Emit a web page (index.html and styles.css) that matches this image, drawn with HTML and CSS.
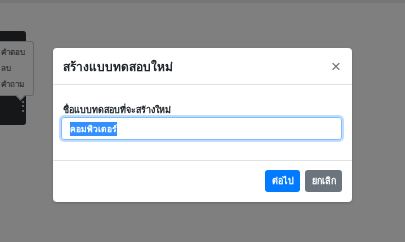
FILE: index.html
```html
<!DOCTYPE html>
<html>

<head>
  <meta charset="utf8">
  <meta name="viewport" content="width=device-width, initial-scale=1.0">
  <link rel="stylesheet" href="styles.css">
  <title>สร้างแบบทดสอบใหม่</title>
</head>

<body>
  <div class="topbar"></div>

  <div class="side-card">
    <div class="menu-pop">
      <div class="menu-item">คำตอบ</div>
      <div class="menu-item">ลบ</div>
      <div class="menu-item">คำถาม</div>
    </div>
    <div class="dots">&#8942;</div>
  </div>

  <div class="backdrop"></div>

  <div class="modal">
    <div class="modal-dialog">
      <div class="modal-header">
        <h5 class="modal-title">สร้างแบบทดสอบใหม่</h5>
        <span class="close">&times;</span>
      </div>
      <div class="modal-body">
        <label class="field-label">ชื่อแบบทดสอบที่จะสร้างใหม่</label>
        <div class="field-input"><span class="selected">คอมพิวเตอร์</span></div>
      </div>
      <div class="modal-footer">
        <button class="btn btn-primary">ต่อไป</button>
        <button class="btn btn-secondary">ยกเลิก</button>
      </div>
    </div>
  </div>
</body>

</html>
```

FILE: styles.css
```css
html, body {
  margin: 0;
  height: 100%;
}
body {
  background: #fff;
  font-family: "Liberation Sans", "Noto Sans", sans-serif;
  color: #212529;
  overflow: hidden;
}
.topbar {
  height: 3px;
  background: #e9ecef;
}

/* page content behind the backdrop */
.side-card {
  position: absolute;
  left: -20px;
  top: 31px;
  width: 46px;
  height: 94px;
  background: #2b2f33;
  border-radius: 3px;
}
.menu-pop {
  position: absolute;
  left: 20px;
  top: 10px;
  width: 34px;
  height: 55px;
  background: #fff;
  border: 1px solid #ccc;
  border-left: 0;
  border-radius: 0 3px 3px 0;
  box-sizing: border-box;
  padding-top: 3px;
  font-size: 8px;
  color: #333;
  overflow: hidden;
}
.side-card::after {
  content: "";
  position: absolute;
  left: 37px;
  top: 61px;
  width: 6px;
  height: 6px;
  background: #fff;
  border-right: 1px solid #ccc;
  border-bottom: 1px solid #ccc;
  transform: rotate(45deg);
}
.menu-item {
  height: 16px;
  line-height: 16px;
  padding-left: 1px;
  white-space: nowrap;
}
.dots {
  position: absolute;
  left: 37px;
  top: 69px;
  color: #fff;
  font-size: 12px;
  line-height: 1;
}

.backdrop {
  position: fixed;
  inset: 0;
  background: rgba(0, 0, 0, 0.5);
}

.modal {
  position: fixed;
  inset: 0;
}
.modal-dialog {
  width: 299px;
  margin: 48px auto 0;
  background: #fff;
  border-radius: 4px;
  box-shadow: 0 1px 3px rgba(0, 0, 0, 0.2);
}
.modal-header {
  display: flex;
  align-items: center;
  justify-content: space-between;
  height: 36px;
  padding: 0 11px 0 10px;
  border-bottom: 1px solid #dee2e6;
}
.modal-title {
  margin: 0;
  font-size: 12px;
  font-weight: 600;
}
.close {
  font-size: 17px;
  color: #6c757d;
  line-height: 1;
}
.modal-body {
  padding: 19px 10px 20px 8px;
}
.field-label {
  display: block;
  font-size: 9px;
  line-height: 12px;
  font-weight: bold;
  margin: 0 0 1px 2px;
}
.field-input {
  height: 23px;
  box-sizing: border-box;
  border: 1px solid #80bdff;
  border-radius: 3px;
  box-shadow: 0 0 0 2px rgba(0, 123, 255, 0.25);
  padding: 0 8px;
  display: flex;
  align-items: center;
  font-size: 8.5px;
  font-weight: bold;
}
.selected {
  background: #3390ff;
  color: #fff;
}
.modal-footer {
  display: flex;
  justify-content: flex-end;
  gap: 5px;
  padding: 9px 10px 10px;
  border-top: 1px solid #dee2e6;
}
.btn {
  height: 22px;
  border: 0;
  border-radius: 3px;
  color: #fff;
  font-family: inherit;
  font-size: 9px;
  font-weight: bold;
  padding: 0;
  white-space: nowrap;
}
.btn-primary {
  background: #007bff;
  width: 35px;
}
.btn-secondary {
  background: #6c757d;
  width: 37px;
}
```
